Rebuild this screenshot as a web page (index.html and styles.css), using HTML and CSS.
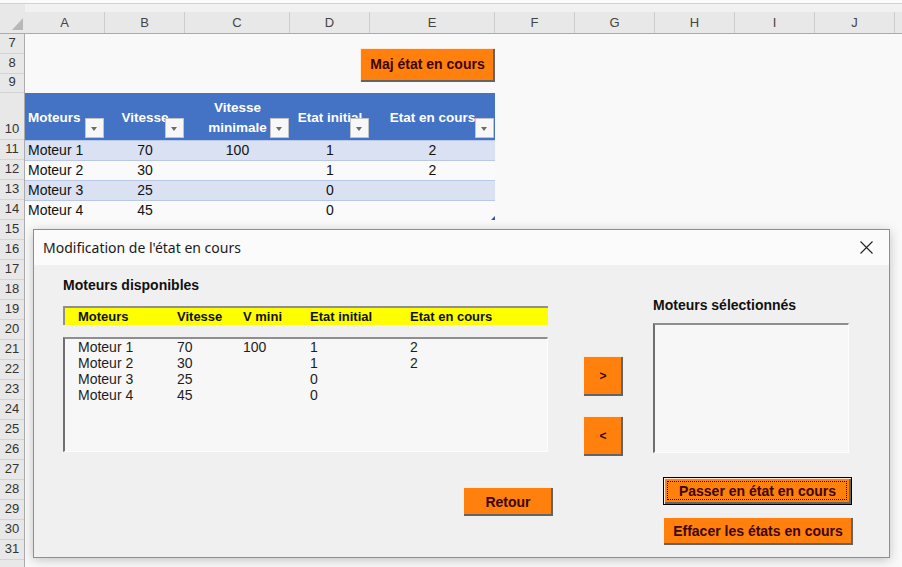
FILE: index.html
```html
<!DOCTYPE html>
<html>
<head>
  <title>Moteurs - Excel</title>
  <link rel="stylesheet" href="styles.css">
</head>
<body>
  <div class="topstrip"></div>
  <div class="colheads">
    <div class="corner">
      <svg width="25" height="29" viewBox="0 0 25 29"><polygon points="23,14 23,26 12,26" fill="#b8b8b8"/></svg>
    </div>
    <div class="ch w80">A</div>
    <div class="ch w80">B</div>
    <div class="ch w105">C</div>
    <div class="ch w80">D</div>
    <div class="ch w125">E</div>
    <div class="ch w80">F</div>
    <div class="ch w80">G</div>
    <div class="ch w80">H</div>
    <div class="ch w80">I</div>
    <div class="ch w80">J</div>
    <div class="ch rest"></div>
  </div>

  <div class="sheet">
    <div class="rowheads">
      <div class="rh">7</div>
      <div class="rh">8</div>
      <div class="rh h19">9</div>
      <div class="rh h47">10</div>
      <div class="rh">11</div>
      <div class="rh">12</div>
      <div class="rh">13</div>
      <div class="rh">14</div>
      <div class="rh">15</div>
      <div class="rh">16</div>
      <div class="rh">17</div>
      <div class="rh">18</div>
      <div class="rh">19</div>
      <div class="rh">20</div>
      <div class="rh">21</div>
      <div class="rh">22</div>
      <div class="rh">23</div>
      <div class="rh">24</div>
      <div class="rh">25</div>
      <div class="rh">26</div>
      <div class="rh">27</div>
      <div class="rh">28</div>
      <div class="rh">29</div>
      <div class="rh">30</div>
      <div class="rh">31</div>
      <div class="rh"></div>
    </div>

    <div class="cells">
      <div class="shape-zone">
        <button class="vb-btn maj">Maj état en cours</button>
      </div>

      <table class="xl-table">
        <colgroup>
          <col style="width:80px"><col style="width:80px"><col style="width:105px"><col style="width:80px"><col style="width:125px">
        </colgroup>
        <tr>
          <th class="left">Moteurs<span class="dd"></span></th>
          <th>Vitesse<span class="dd"></span></th>
          <th>Vitesse<br>minimale<span class="dd"></span></th>
          <th>Etat initial<span class="dd"></span></th>
          <th>Etat en cours<span class="dd"></span></th>
        </tr>
        <tr class="band">
          <td class="left">Moteur 1</td><td>70</td><td>100</td><td>1</td><td>2</td>
        </tr>
        <tr>
          <td class="left">Moteur 2</td><td>30</td><td></td><td>1</td><td>2</td>
        </tr>
        <tr class="band">
          <td class="left">Moteur 3</td><td>25</td><td></td><td>0</td><td></td>
        </tr>
        <tr>
          <td class="left">Moteur 4</td><td>45</td><td></td><td>0</td><td class="last"></td>
        </tr>
      </table>
    </div>
  </div>

  <div class="dialog">
    <div class="dlg-title">
      <span>Modification de l'état en cours</span>
      <svg class="close" width="13" height="13" viewBox="0 0 13 13"><path d="M0.5 0.5 L12.5 12.5 M12.5 0.5 L0.5 12.5" stroke="#222" stroke-width="1.1"/></svg>
    </div>
    <div class="dlg-body">
      <div class="col-left">
        <div class="dlg-label">Moteurs disponibles</div>
        <div class="yellow-head list-grid">
          <span>Moteurs</span><span>Vitesse</span><span>V mini</span><span>Etat initial</span><span>Etat en cours</span>
        </div>
        <div class="listbox wide">
          <div class="list-grid item"><span>Moteur 1</span><span>70</span><span>100</span><span>1</span><span>2</span></div>
          <div class="list-grid item"><span>Moteur 2</span><span>30</span><span></span><span>1</span><span>2</span></div>
          <div class="list-grid item"><span>Moteur 3</span><span>25</span><span></span><span>0</span><span></span></div>
          <div class="list-grid item"><span>Moteur 4</span><span>45</span><span></span><span>0</span><span></span></div>
        </div>
        <button class="vb-btn retour">Retour</button>
      </div>

      <div class="col-mid">
        <button class="vb-btn arrow">&gt;</button>
        <button class="vb-btn arrow">&lt;</button>
      </div>

      <div class="col-right">
        <div class="dlg-label">Moteurs sélectionnés</div>
        <div class="listbox narrow"></div>
        <button class="vb-btn act focused">Passer en état en cours</button>
        <button class="vb-btn act effacer">Effacer les états en cours</button>
      </div>
    </div>
  </div>
</body>
</html>
```

FILE: styles.css
```css
body {
  margin: 0;
  background-color: #f9f9f9;
  font-family: "Liberation Sans", Arial, sans-serif;
  overflow: hidden;
}

.topstrip {
  height: 3px;
  background-color: #fbfbfb;
  border-bottom: 1px solid #d2d2d2;
}

/* column letters */
.colheads {
  display: flex;
  height: 29px;
  background-color: #f1f1f1;
  border-bottom: 1px solid #ababab;
}

.corner {
  width: 25px;
  flex: none;
  background-color: #e8e8e8;
}

.corner svg {
  display: block;
}

.ch {
  flex: none;
  box-sizing: border-box;
  margin-top: 8px;
  height: 21px;
  line-height: 22px;
  text-align: center;
  font-size: 13px;
  color: #444;
  background-color: #e8e8e8;
  border-right: 1px solid #cdcdcd;
}

.w80 { width: 80px; }
.w105 { width: 105px; }
.w125 { width: 125px; }
.ch.rest { flex: 1; border-right: none; }

/* grid body */
.sheet {
  display: flex;
}

.rowheads {
  width: 25px;
  flex: none;
  box-sizing: border-box;
  border-right: 1px solid #ababab;
  background-color: #e8e8e8;
}

.rh {
  box-sizing: border-box;
  height: 20px;
  display: flex;
  align-items: flex-end;
  justify-content: center;
  padding-bottom: 2px;
  line-height: 16px;
  font-size: 13px;
  color: #333;
  border-bottom: 1px solid #d4d4d4;
}

.rh.h19 { height: 19px; }
.rh.h47 { height: 47px; }

.cells {
  flex: 1;
}

.shape-zone {
  height: 59px;
  box-sizing: border-box;
  padding: 14px 0 0 335px;
}

/* VBA style command buttons */
.vb-btn {
  display: block;
  box-sizing: border-box;
  padding: 0;
  border: none;
  background-color: #ff800c;
  color: #3d0500;
  font-family: "Liberation Sans", Arial, sans-serif;
  font-weight: bold;
  font-size: 14px;
  box-shadow: inset 1px 1px 0 #ffe9d2, inset -2px -2px 0 #646464;
  cursor: pointer;
}

.maj {
  width: 135px;
  height: 34px;
  padding-bottom: 2px;
}

/* excel table */
.xl-table {
  border-collapse: collapse;
  table-layout: fixed;
  width: 470px;
  font-size: 14px;
}

.xl-table th {
  position: relative;
  height: 47px;
  padding: 3px 2px 0;
  box-sizing: border-box;
  background-color: #4472c4;
  color: #fff;
  font-size: 13.5px;
  line-height: 20px;
  text-align: center;
  vertical-align: middle;
}

.xl-table td {
  height: 20px;
  padding: 0 3px;
  box-sizing: border-box;
  text-align: center;
  color: #111;
  background-color: #fafafa;
  border-top: 1px solid #b9c8e4;
  line-height: 19px;
}

.xl-table .left {
  text-align: left;
  padding-left: 3px;
}

.xl-table tr.band td {
  background-color: #d9e1f2;
}

.xl-table td.last {
  position: relative;
}

.xl-table td.last::after {
  content: "";
  position: absolute;
  right: 0;
  bottom: 0;
  border-left: 4px solid transparent;
  border-bottom: 4px solid #2f5597;
}

.dd {
  position: absolute;
  right: 1px;
  bottom: 2px;
  width: 19px;
  height: 20px;
  box-sizing: border-box;
  background-color: #f7f7f7;
  border: 1px solid #c3c3c3;
}

.dd::after {
  content: "";
  position: absolute;
  left: 5px;
  top: 8px;
  border-left: 3.5px solid transparent;
  border-right: 3.5px solid transparent;
  border-top: 4px solid #6b6b6b;
}

/* userform */
.dialog {
  position: absolute;
  left: 33px;
  top: 229px;
  width: 857px;
  height: 329px;
  box-sizing: border-box;
  border: 1px solid #8e8e8e;
  background-color: #f0f0f0;
  box-shadow: 0 2px 10px rgba(0, 0, 0, 0.22);
}

.dlg-title {
  height: 35px;
  background-color: #fbfbfb;
  display: flex;
  align-items: center;
  justify-content: space-between;
  padding: 0 16px 0 9px;
  font-family: "Noto Sans", "Open Sans", sans-serif;
  font-size: 14px;
  color: #1a1a1a;
}

.dlg-body {
  display: flex;
  padding: 12px 0 0 29px;
}

.dlg-label {
  height: 16px;
  line-height: 16px;
  font-weight: bold;
  font-size: 14px;
  color: #111;
}

.col-left {
  width: 490px;
  flex: none;
}

.list-grid {
  display: grid;
  grid-template-columns: 99px 66px 67px 100px 1fr;
  padding-left: 13px;
}

.yellow-head {
  margin-top: 13px;
  width: 485px;
  height: 19px;
  box-sizing: border-box;
  background-color: #ffff00;
  border-top: 2px solid #8f8f8f;
  border-left: 2px solid #8f8f8f;
  font-weight: bold;
  font-size: 13px;
  line-height: 17px;
  color: #111;
}

.listbox {
  box-sizing: border-box;
  background-color: #f7f7f7;
  border-top: 2px solid #8f8f8f;
  border-left: 2px solid #6f6f6f;
  border-right: 1px solid #fdfdfd;
  border-bottom: 1px solid #fdfdfd;
}

.listbox.wide {
  margin-top: 12px;
  width: 485px;
  height: 115px;
}

.item {
  font-size: 14px;
  line-height: 16px;
  color: #1e1e1e;
}

.retour {
  margin: 35px 0 0 auto;
  width: 90px;
  height: 29px;
}

.col-mid {
  width: 40px;
  flex: none;
  margin-left: 30px;
  padding-top: 79px;
}

.arrow {
  width: 40px;
  height: 40px;
  margin-bottom: 20px;
  font-size: 12px;
}

.col-right {
  width: 200px;
  flex: none;
  margin-left: 30px;
}

.col-right .dlg-label {
  margin-top: 20px;
}

.listbox.narrow {
  margin-top: 10px;
  width: 196px;
  height: 130px;
}

.act {
  margin-left: 10px;
  width: 190px;
  height: 28px;
}

.focused {
  position: relative;
  margin-top: 24px;
  width: 189px;
  border: 1px solid #000;
}

.focused::after {
  content: "";
  position: absolute;
  left: 3px;
  top: 3px;
  right: 4px;
  bottom: 4px;
  border: 1px dotted #000;
}

.effacer {
  margin-top: 12px;
}
```
